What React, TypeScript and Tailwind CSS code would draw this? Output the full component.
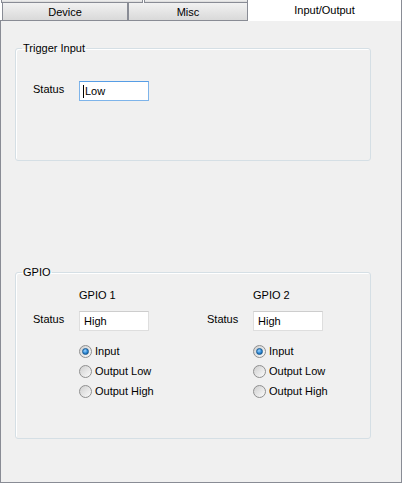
import React from 'react';

const font = { fontFamily: '"Liberation Sans", Arial, sans-serif' };

const Radio = ({ label, checked }: { label: string; checked?: boolean }) => (
  <div className="flex h-5 items-center gap-[3px]">
    <span className="flex h-[13px] w-[13px] items-center justify-center rounded-full border border-[#8f8f8f] bg-gradient-to-br from-[#cfcfcf] to-[#fbfbfb]">
      {checked && (
        <span className="h-[7px] w-[7px] rounded-full border border-[#1b5c93] bg-[radial-gradient(circle_at_40%_35%,#9fd5ff,#2a86d4_55%,#0e4f85)]" />
      )}
    </span>
    <span>{label}</span>
  </div>
);

const TextBox = ({ value, focused }: { value: string; focused?: boolean }) => (
  <div
    className={
      'flex h-5 w-[70px] items-center bg-white pl-[4px] ' +
      (focused ? 'border border-[#7eb4ea] border-t-[#569de5]' : 'border border-[#dedede] border-t-[#cdcdcd]')
    }
  >
    {focused && <span className="-ml-[1px] mr-[1px] inline-block h-[13px] w-px bg-black" />}
    <span className="leading-[13px]">{value}</span>
  </div>
);

const GpioColumn = ({ title, className }: { title: string; className?: string }) => (
  <div className={className}>
    <div className="pl-[46px] leading-[13px]">{title}</div>
    <div className="mt-[9px] flex items-start">
      <span className="w-[46px] pt-[2px] leading-[13px]">Status</span>
      <TextBox value="High" />
    </div>
    <div className="mt-[10px] pl-[46px]">
      <Radio label="Input" checked />
      <Radio label="Output Low" />
      <Radio label="Output High" />
    </div>
  </div>
);

const tabBg = 'bg-gradient-to-b from-[#f2f2f2] to-[#d9d9d9]';

export default function App() {
  return (
    <div className="flex h-[485px] w-[402px] flex-col bg-white text-[11px] text-black" style={font}>
      {/* tab strip */}
      <div className="flex h-[21px]">
        <div className="flex w-[248px] flex-col">
          <div className="flex h-[3px] overflow-hidden">
            <div className={'ml-[1px] w-[142px] border-x border-b border-[#898c95] ' + tabBg} />
            <div className={'ml-[1px] w-[104px] border-x border-b border-[#898c95] ' + tabBg} />
          </div>
          <div className="flex flex-1 border-b border-[#898c95] pl-[2px]">
            <div className={'flex w-[126px] items-center justify-center border-x border-[#898c95] pt-[1px] ' + tabBg}>
              Device
            </div>
            <div className={'flex flex-1 items-center justify-center border-r border-l border-[#898c95] pt-[1px] ' + tabBg}>
              Misc
            </div>
          </div>
        </div>
        <div className="flex flex-1 items-center justify-center border-r border-[#898c95] bg-white pb-[1px]">
          Input/Output
        </div>
      </div>

      {/* page */}
      <div className="mb-[2px] flex-1 border-x border-b border-[#898c95] bg-[#f0f0f0] pl-[14px] pt-[21px]">
        <fieldset className="h-[119px] w-[356px] min-w-0 rounded-[3px] border border-[#d5dfe5] shadow-[inset_1px_1px_0_#ffffff]">
          <legend className="ml-[6px] px-[1px] leading-[13px]">Trigger Input</legend>
          <div className="mt-[26px] flex items-start pl-[17px]">
            <span className="w-[46px] pt-[2px] leading-[13px]">Status</span>
            <TextBox value="Low" focused />
          </div>
        </fieldset>

        <fieldset className="mt-[105px] h-[173px] w-[356px] min-w-0 rounded-[3px] border border-[#d5dfe5] shadow-[inset_1px_1px_0_#ffffff]">
          <legend className="ml-[6px] px-[1px] leading-[13px]">GPIO</legend>
          <div className="mt-[10px] flex pl-[17px]">
            <GpioColumn title="GPIO 1" className="w-[174px] shrink-0" />
            <GpioColumn title="GPIO 2" />
          </div>
        </fieldset>
      </div>
    </div>
  );
}
